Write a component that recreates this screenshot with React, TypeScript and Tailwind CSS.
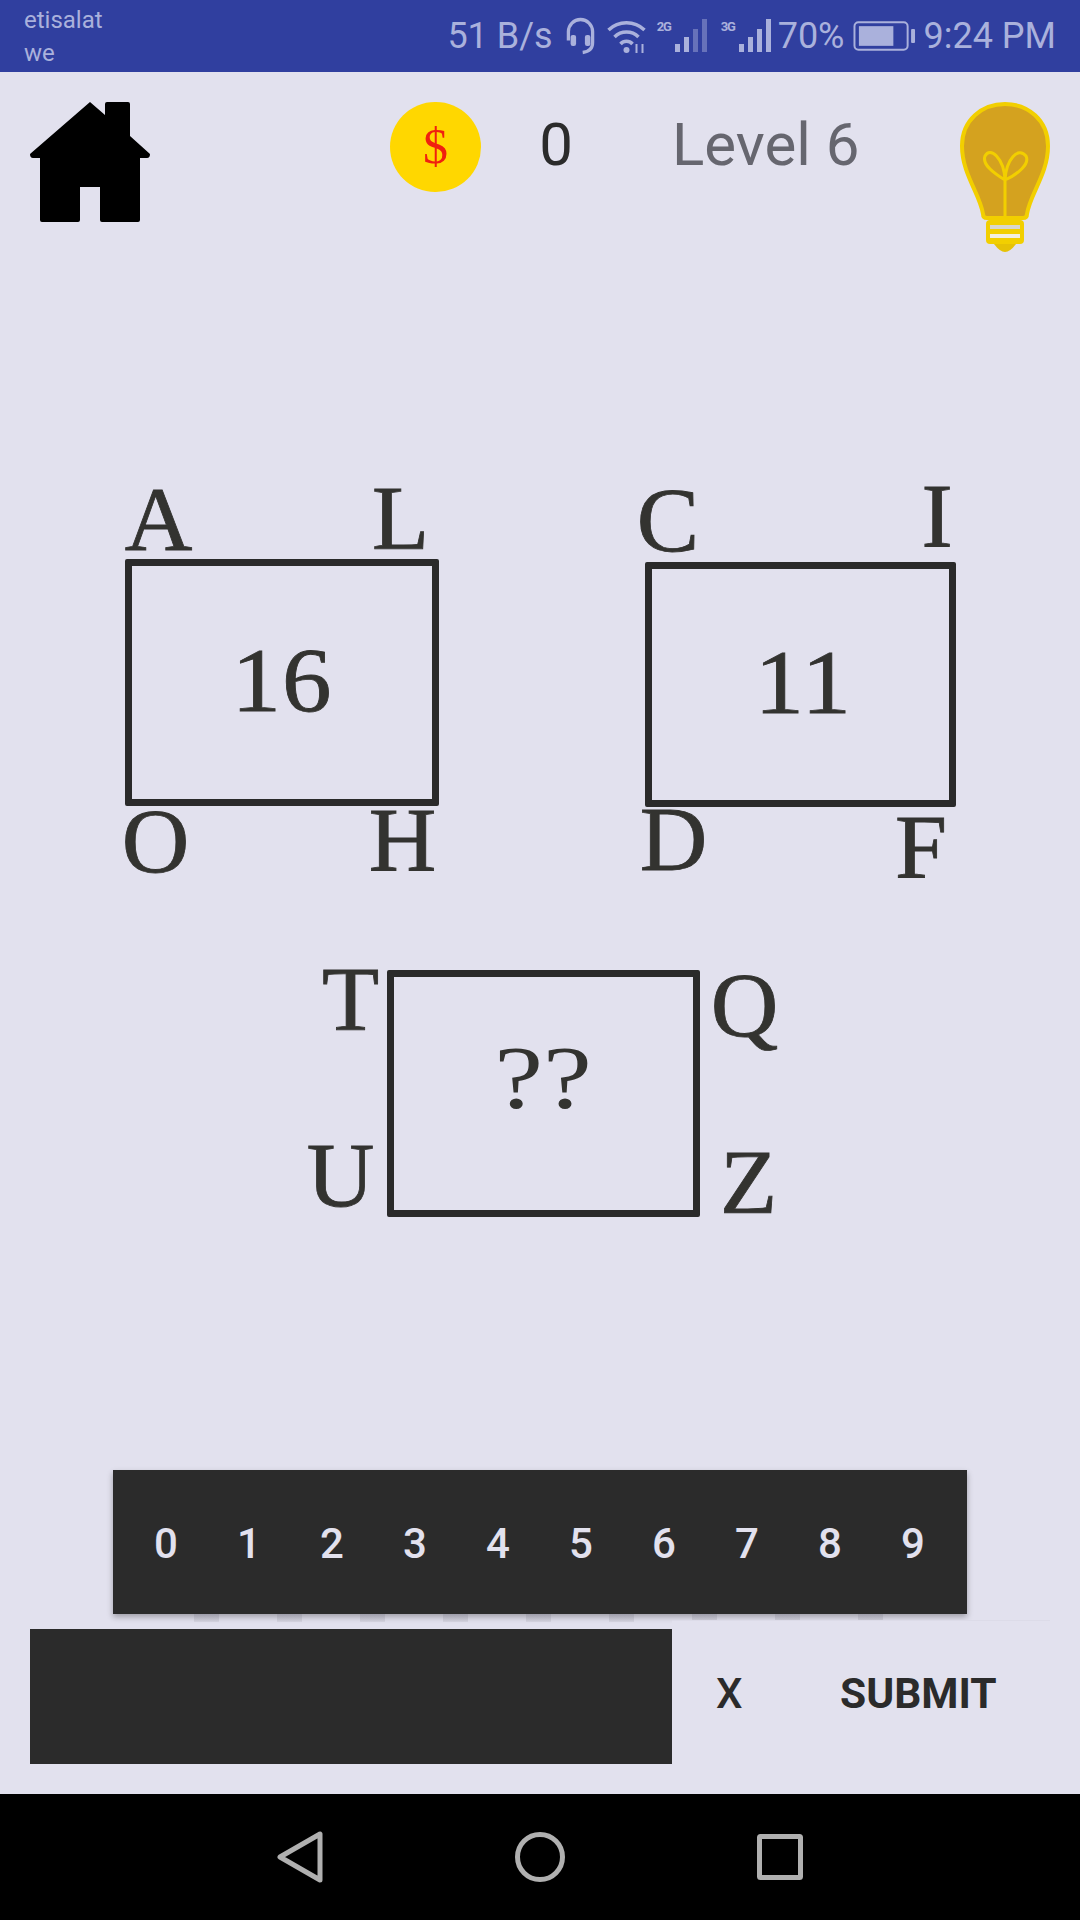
// App.tsx
const DIGITS = ["0", "1", "2", "3", "4", "5", "6", "7", "8", "9"];

const LETTER =
  "absolute scale-x-[1.04] font-['Liberation_Serif',serif] text-[90px] leading-none text-[#333330] [-webkit-text-stroke:0.8px_#333330]";
const NUMBER =
  "mb-[4px] inline-block scale-x-[1.1] font-['Liberation_Serif',serif] text-[90px] tracking-[1px] leading-none text-[#333330] [-webkit-text-stroke:0.8px_#333330]";
const BOX = "flex h-full w-full items-center justify-center rounded-[2px] border-[7px] border-[#2a2a2a]";

function Signal({ label, dim }: { label: string; dim?: boolean }) {
  return (
    <div className="flex h-[36px] items-start">
      <span className="mt-[1px] w-[17px] text-[13px] font-bold leading-[16px] tracking-[-1px]">{label}</span>
      <svg viewBox="0 0 35 34" className="h-[34px] w-[35px]" fill="currentColor">
        <rect x="1" y="26" width="5" height="8" />
        <rect x="10" y="19" width="5" height="15" />
        <rect x="19" y="11" width="5" height="23" opacity={dim ? 0.45 : 1} />
        <rect x="28" y="1" width="5" height="33" opacity={dim ? 0.45 : 1} />
      </svg>
    </div>
  );
}

function StatusBar() {
  return (
    <div className="flex h-[72px] items-center justify-between bg-[#303f9f] pl-[24px] pr-[24px] font-['Roboto',sans-serif] text-[#aab1dc]">
      <div className="mt-[2px] flex flex-col text-[24px] leading-[33px]">
        <span>etisalat</span>
        <span>we</span>
      </div>
      <div className="flex items-center text-[36px] leading-none">
        <span>51 B/s</span>
        <svg viewBox="0 0 30 36" className="ml-[11px] h-[40px] w-[33px]" fill="none" stroke="currentColor" strokeWidth="3">
          <path d="M4 22 V14 a11 11 0 0 1 22 0 V24 q0 8 -9 9" />
          <rect x="6" y="17" width="5" height="10" rx="2" fill="currentColor" stroke="none" />
          <rect x="19" y="17" width="5" height="10" rx="2" fill="currentColor" stroke="none" />
        </svg>
        <svg viewBox="0 0 40 36" className="ml-[9px] h-[36px] w-[41px]" fill="none" stroke="currentColor" strokeWidth="3.5">
          <path d="M2 12 a26 26 0 0 1 36 0" />
          <path d="M8 19 a17 17 0 0 1 24 0" />
          <path d="M14 26 a8 8 0 0 1 12 0" />
          <circle cx="20" cy="32" r="3" fill="currentColor" stroke="none" />
          <path d="M30 26 v9 M36 35 v-9" strokeWidth="2" />
        </svg>
        <div className="ml-[10px] w-[52px]">
          <Signal label="2G" dim />
        </div>
        <div className="ml-[12px] w-[52px]">
          <Signal label="3G" />
        </div>
        <span className="ml-[5px]">70%</span>
        <svg viewBox="0 0 64 32" className="ml-[8px] h-[32px] w-[63px]" fill="none">
          <rect x="1.5" y="2" width="54" height="28" rx="4" stroke="currentColor" strokeWidth="2" />
          <rect x="6" y="6" width="35" height="20" fill="currentColor" />
          <rect x="59" y="9" width="4" height="14" rx="1" fill="currentColor" />
        </svg>
        <span className="ml-[8px]">9:24 PM</span>
      </div>
    </div>
  );
}

function Header() {
  return (
    <div className="flex h-[190px] items-start pl-[30px] pt-[30px] font-['Roboto',sans-serif]">
      <svg viewBox="0 0 120 120" className="h-[120px] w-[120px]" fill="#000000">
        <path d="M60 0 L75 13 V2 Q75 0 77 0 H98 Q100 0 100 2 V34 L120 52 Q120 56 117 56 H110 V118 Q110 120 108 120 H72 Q70 120 70 118 V85 H50 V118 Q50 120 48 120 H12 Q10 120 10 118 V56 H3 Q0 56 0 52 Z" />
      </svg>
      <div className="ml-[240px] flex h-[90px] w-[91px] items-center justify-center rounded-full bg-[#ffd700] pb-[2px] font-['Liberation_Serif',serif] text-[50px] leading-none text-[#f0200f]">
        $
      </div>
      <div className="ml-[50px] flex h-[86px] w-[50px] items-center justify-center text-[60px] text-[#2b2b2b]">0</div>
      <div className="ml-[91px] flex h-[86px] w-[198px] items-center text-[60px] text-[#66666f]">Level 6</div>
      <svg viewBox="0 0 90 150" className="ml-[90px] h-[150px] w-[90px]">
        <path
          d="M23 112 C20 92 2 72 2 44 C2 18 22 2 45 2 C68 2 88 18 88 44 C88 72 70 92 67 112 Q67 116 63 116 H27 Q23 116 23 112 Z"
          fill="#d4a21f"
          stroke="#f2cf00"
          strokeWidth="4"
        />
        <path
          d="M45 115 V78 C32 70 22 62 25 54 C30 44 44 56 45 78 C46 58 58 44 66 54 C70 62 58 72 45 78"
          fill="none"
          stroke="#f2cf00"
          strokeWidth="3"
        />
        <rect x="26" y="118" width="38" height="24" rx="4" fill="#f2cf00" />
        <rect x="30" y="123" width="30" height="4" fill="#d8d6cc" />
        <rect x="30" y="132" width="30" height="4" fill="#f3efe0" />
        <path d="M34 142 H56 Q50 150 45 150 Q40 150 34 142 Z" fill="#e6c205" />
      </svg>
    </div>
  );
}

function Puzzle() {
  return (
    <div className="flex flex-col">
      {/* top two boxes */}
      <div className="mt-[297px] flex items-start pl-[125px]">
        <div className="relative h-[247px] w-[314px]">
          <span className={`${LETTER} left-[1px] top-[-84px]`}>A</span>
          <span className={`${LETTER} left-[248px] top-[-85px]`}>L</span>
          <div className={BOX}>
            <span className={NUMBER}>16</span>
          </div>
          <span className={`${LETTER} left-[-2px] top-[238px]`}>O</span>
          <span className={`${LETTER} left-[245px] top-[237px]`}>H</span>
        </div>
        <div className="relative ml-[206px] mt-[3px] h-[245px] w-[311px]">
          <span className={`${LETTER} left-[-7px] top-[-86px]`}>C</span>
          <span className={`${LETTER} left-[277px] top-[-90px]`}>I</span>
          <div className={BOX}>
            <span className={`${NUMBER} ml-[6px]`}>11</span>
          </div>
          <span className={`${LETTER} left-[-4px] top-[233px]`}>D</span>
          <span className={`${LETTER} left-[251px] top-[241px]`}>F</span>
        </div>
      </div>
      {/* bottom box */}
      <div className="mt-[163px] flex pl-[387px]">
        <div className="relative h-[247px] w-[313px]">
          <span className={`${LETTER} left-[-64px] top-[-15px]`}>T</span>
          <span className={`${LETTER} left-[325px] top-[-9px]`}>Q</span>
          <div className={BOX}>
            <span className="mb-[32px] inline-block scale-x-[1.25] font-['Liberation_Serif',serif] text-[88px] leading-none text-[#333330]">
              ??
            </span>
          </div>
          <span className={`${LETTER} left-[-79px] top-[161px]`}>U</span>
          <span className={`${LETTER} left-[334px] top-[168px]`}>Z</span>
        </div>
      </div>
    </div>
  );
}

function Keypad() {
  return (
    <div className="mt-[253px] flex flex-col font-['Roboto',sans-serif]">
      <div className="ml-[113px] flex h-[144px] w-[854px] items-center justify-center bg-[#2b2b2b] pr-[1px] pt-[3px] shadow-[0_3px_6px_rgba(0,0,0,0.3)]">
        {DIGITS.map((d) => (
          <button key={d} className="w-[83px] text-center text-[42px] font-medium leading-none text-[#e2e1ee]">
            {d}
          </button>
        ))}
      </div>
      {/* the keys' shadows that peek out below the panel */}
      <div className="ml-[194px] flex h-[8px] gap-[58px]">
        {DIGITS.slice(0, 9).map((d) => (
          <div key={d} className="h-full w-[25px] bg-gradient-to-b from-[#9d9ca8] to-[#d4d3df]" />
        ))}
      </div>
      <div className="relative mt-[-2px] flex pl-[30px]">
        <div className="mt-[9px] h-[135px] w-[642px] bg-[#2b2b2b]" />
        <div className="flex h-[174px] w-[378px] items-start border-t border-[#dcdbe8] bg-[#e2e1ee] pt-[48px] text-[#2b2b2b]">
          <span className="ml-[44px] w-[26px] text-center text-[42px] font-medium leading-[50px]">X</span>
          <span className="ml-[98px] text-[42.5px] font-bold leading-[50px]">SUBMIT</span>
        </div>
      </div>
    </div>
  );
}

function NavBar() {
  return (
    <div className="flex h-[126px] items-center bg-black pl-[277px]">
      <svg viewBox="0 0 46 52" className="h-[52px] w-[46px]" fill="none" stroke="#b0b0b0" strokeWidth="5" strokeLinejoin="round">
        <path d="M3 26 L43 3 V49 Z" />
      </svg>
      <svg viewBox="0 0 50 50" className="ml-[192px] h-[50px] w-[50px]" fill="none" stroke="#b0b0b0" strokeWidth="5">
        <circle cx="25" cy="25" r="22.5" />
      </svg>
      <svg viewBox="0 0 46 46" className="ml-[192px] h-[46px] w-[46px]" fill="none" stroke="#b0b0b0" strokeWidth="5" strokeLinejoin="round">
        <rect x="2.5" y="2.5" width="41" height="41" rx="1" />
      </svg>
    </div>
  );
}

export default function App() {
  return (
    <div className="flex h-[1920px] w-[1080px] flex-col overflow-hidden bg-[#e2e1ee]">
      <StatusBar />
      <Header />
      <Puzzle />
      <Keypad />
      <div className="mt-auto">
        <NavBar />
      </div>
    </div>
  );
}
